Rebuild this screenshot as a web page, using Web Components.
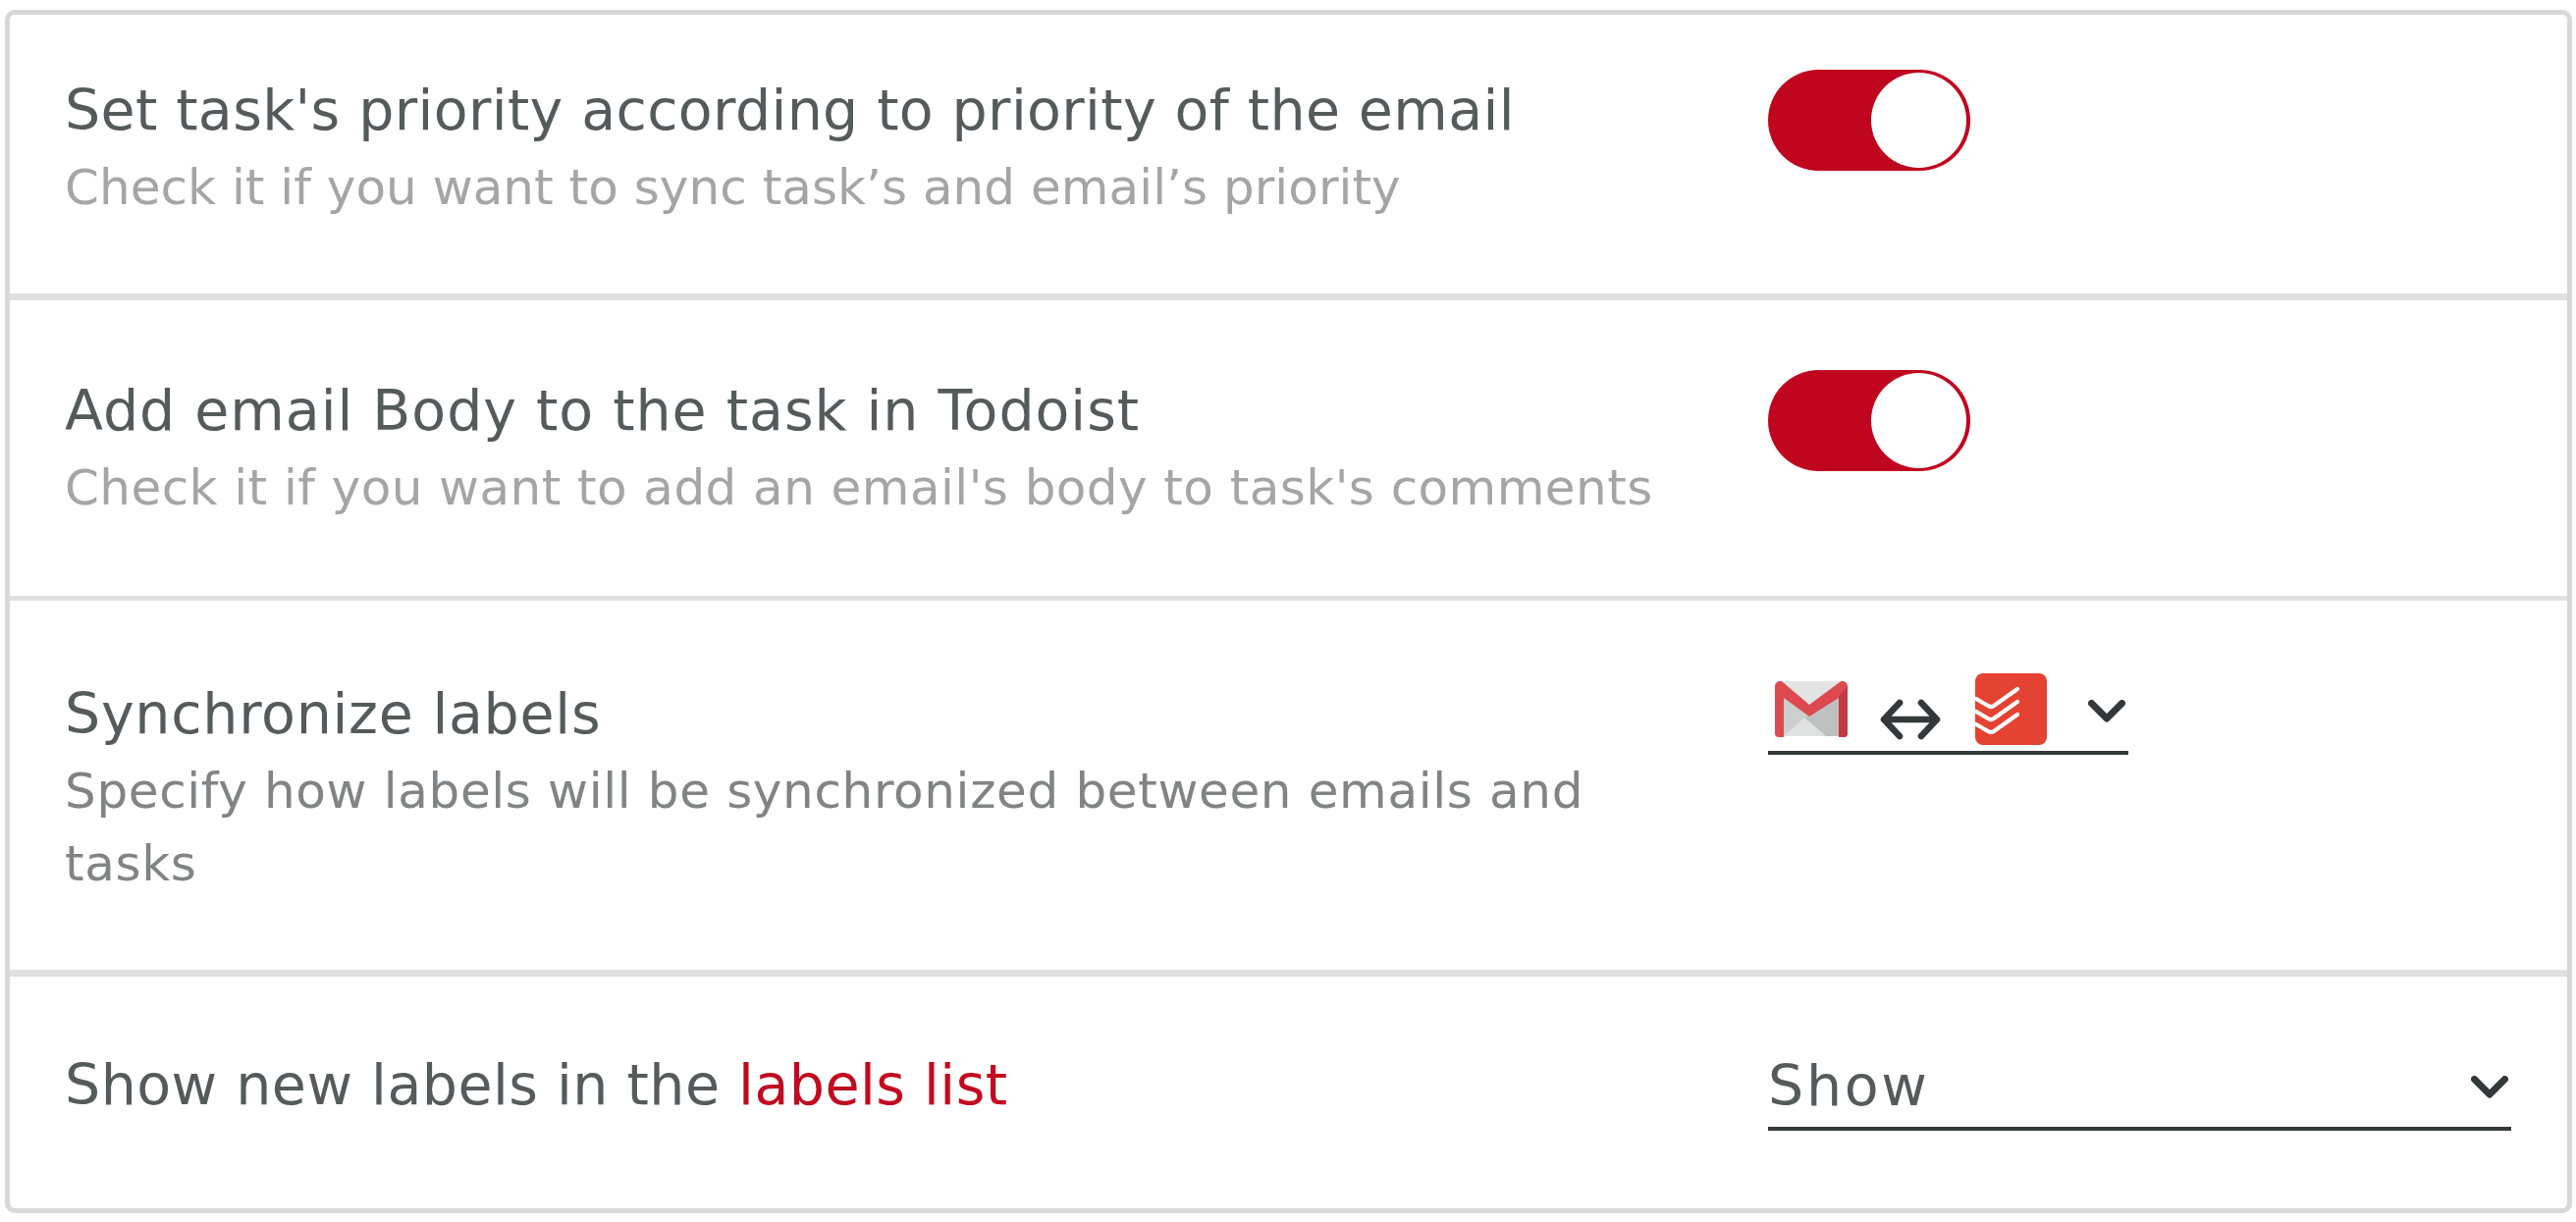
<!DOCTYPE html>
<html>
<head>
<meta charset="utf-8">
<style>
  html, body { margin: 0; background: #fff; }
  body { padding: 10px 4px 9px 5px; font-family: "DejaVu Sans", Inter, sans-serif; }
</style>
</head>
<body>
<settings-card>
  <setting-row thick height="291" pad="56" text-top="3" title-gap="0.36" hint-gap="0.03" title-text="Set task's priority according to priority of the email" hint="Check it if you want to sync task’s and email’s priority">
    <toggle-switch></toggle-switch>
  </setting-row>
  <setting-row height="306" pad="71" text-top="3" title-gap="0.95" hint-gap="0.43" title-text="Add email Body to the task in Todoist" hint="Check it if you want to add an email's body to task's comments">
    <toggle-switch></toggle-switch>
  </setting-row>
  <setting-row thick dark height="383" pad="77" text-top="0" title-gap="0.73" hint-gap="0.65" title-text="Synchronize labels" hint="Specify how labels will be synchronized between emails and tasks">
    <select-box width="367">
      <span style="display:flex;align-items:flex-end;height:76px">
        <svg width="74" height="57" viewBox="0 0 74 57" style="margin:0 0 14px 7px">
          <path d="M3 0h68v56H3z" fill="#e2e3e3"/>
          <path d="M9 17l26 18 30-18v39H9z" fill="#cdcfcf"/>
          <path d="M35 35l30-18v39H52L30 37z" fill="#bfc1c1"/>
          <path d="M30 37l22 19H9z" fill="#e0e1e1"/>
          <path d="M0 5a5 5 0 0 1 8-4l27 23L66 1a5 5 0 0 1 8 4v48a4 4 0 0 1-4 4h-5V17L35 36 9 17v40H4a4 4 0 0 1-4-4z" fill="#dc4a50"/>
          <path d="M65 16l9-11v48a4 4 0 0 1-4 4h-5z" fill="#c23a46"/>
        </svg>
        <svg width="62" height="44" viewBox="0 0 62 44" style="margin:0 0 10px 33px">
          <path d="M20 5L4 22l16 17M42 5l16 17-16 17M5 22h52" fill="none" stroke="#33383a" stroke-width="6.6" stroke-linecap="round" stroke-linejoin="round"/>
        </svg>
        <svg width="73" height="73" viewBox="0 0 73 73" style="margin:0 0 6px 35px">
          <rect width="73" height="73" rx="8" fill="#e44232"/>
          <path d="M1 26l12 7q3 2 6 0l24-17M1 39l12 7q3 2 6 0l24-17M1 52l12 7q3 2 6 0l24-17" fill="none" stroke="#fff" stroke-width="4.2" stroke-linecap="round"/>
        </svg>
      </span>
    </select-box>
  </setting-row>
  <setting-row height="240" pad="77" text-top="-5" title-gap="0.47" title-html="Show new labels in the <em>labels list</em>">
    <select-box width="757"><span class="value">Show</span></select-box>
  </setting-row>
</settings-card>

<template id="card-tpl">
  <style>
    :host {
      display: block;
      box-sizing: border-box;
      height: 1226px;
      border: 5px solid #d7d9d9;
      border-radius: 10px;
      overflow: hidden;
    }
  </style>
  <slot></slot>
</template>

<template id="row-tpl">
  <style>
    :host {
      display: grid;
      grid-template-columns: 1735px 1fr;
      box-sizing: border-box;
      border-bottom: 5px solid #dfe1e1;
      padding-left: 56px;
    }
    :host(:last-child) { border-bottom: 0; }
    :host([thick]) { border-bottom-width: 7px; }
    .text { margin-top: var(--text-top, 0); }
    .title {
      font-size: 57px;
      line-height: 76px;
      letter-spacing: var(--title-gap, 0);
      color: #555b5b;
    }
    .hint {
      margin-top: 4px;
      font-size: 50px;
      line-height: 74px;
      letter-spacing: var(--hint-gap, 0);
      color: #a4a6a6;
      max-width: 1660px;
    }
    :host([dark]) .hint { color: #808484; }
    em { font-style: normal; color: #c10a1f; }
  </style>
  <div class="text">
    <div class="title"></div>
    <div class="hint"></div>
  </div>
  <div class="control"><slot></slot></div>
</template>

<template id="toggle-tpl">
  <style>
    :host {
      display: block;
      box-sizing: border-box;
      width: 206px;
      height: 103px;
      padding: 3px 4px 3px 0;
      border-radius: 52px;
      background: #c0061e;
    }
    .knob {
      width: 97px;
      height: 97px;
      margin-left: auto;
      border-radius: 50%;
      background: #fff;
    }
  </style>
  <div class="knob"></div>
</template>

<template id="select-tpl">
  <style>
    :host {
      display: flex;
      align-items: center;
      justify-content: space-between;
      box-sizing: border-box;
      height: 80px;
      border-bottom: 4px solid #33383a;
      font-size: 57px;
      color: #555b5b;
    }
    svg { flex: none; margin: 0 3px 5px 0; }
    ::slotted(.value) { letter-spacing: 2.7px; margin-bottom: 9px; }
  </style>
  <slot></slot>
  <svg width="38" height="24" viewBox="0 0 38 24"><path d="M3.5 3.5L19 19 34.5 3.5" fill="none" stroke="#33383a" stroke-width="7" stroke-linecap="round" stroke-linejoin="round"/></svg>
</template>

<script>
  function shadow(el, id) {
    el.attachShadow({ mode: "open" })
    el.shadowRoot.appendChild(document.getElementById(id).content.cloneNode(true))
  }

  class SettingsCard extends HTMLElement {
    constructor() {
      super()
      shadow(this, "card-tpl")
    }
  }

  class SettingRow extends HTMLElement {
    constructor() {
      super()
      shadow(this, "row-tpl")
    }

    connectedCallback() {
      const root = this.shadowRoot
      const title = root.querySelector(".title")
      const hint = root.querySelector(".hint")
      if (this.hasAttribute("title-html")) title.innerHTML = this.getAttribute("title-html")
      else title.textContent = this.getAttribute("title-text")
      if (this.hasAttribute("hint")) hint.textContent = this.getAttribute("hint")
      else hint.remove()
      this.style.height = this.getAttribute("height") + "px"
      this.style.paddingTop = this.getAttribute("pad") + "px"
      this.style.setProperty("--text-top", this.getAttribute("text-top") + "px")
      this.style.setProperty("--title-gap", this.getAttribute("title-gap") + "px")
      this.style.setProperty("--hint-gap", this.getAttribute("hint-gap") + "px")
    }
  }

  class ToggleSwitch extends HTMLElement {
    constructor() {
      super()
      shadow(this, "toggle-tpl")
    }
  }

  class SelectBox extends HTMLElement {
    constructor() {
      super()
      shadow(this, "select-tpl")
    }

    connectedCallback() {
      this.style.width = this.getAttribute("width") + "px"
    }
  }

  customElements.define("settings-card", SettingsCard)
  customElements.define("setting-row", SettingRow)
  customElements.define("toggle-switch", ToggleSwitch)
  customElements.define("select-box", SelectBox)
</script>
</body>
</html>
